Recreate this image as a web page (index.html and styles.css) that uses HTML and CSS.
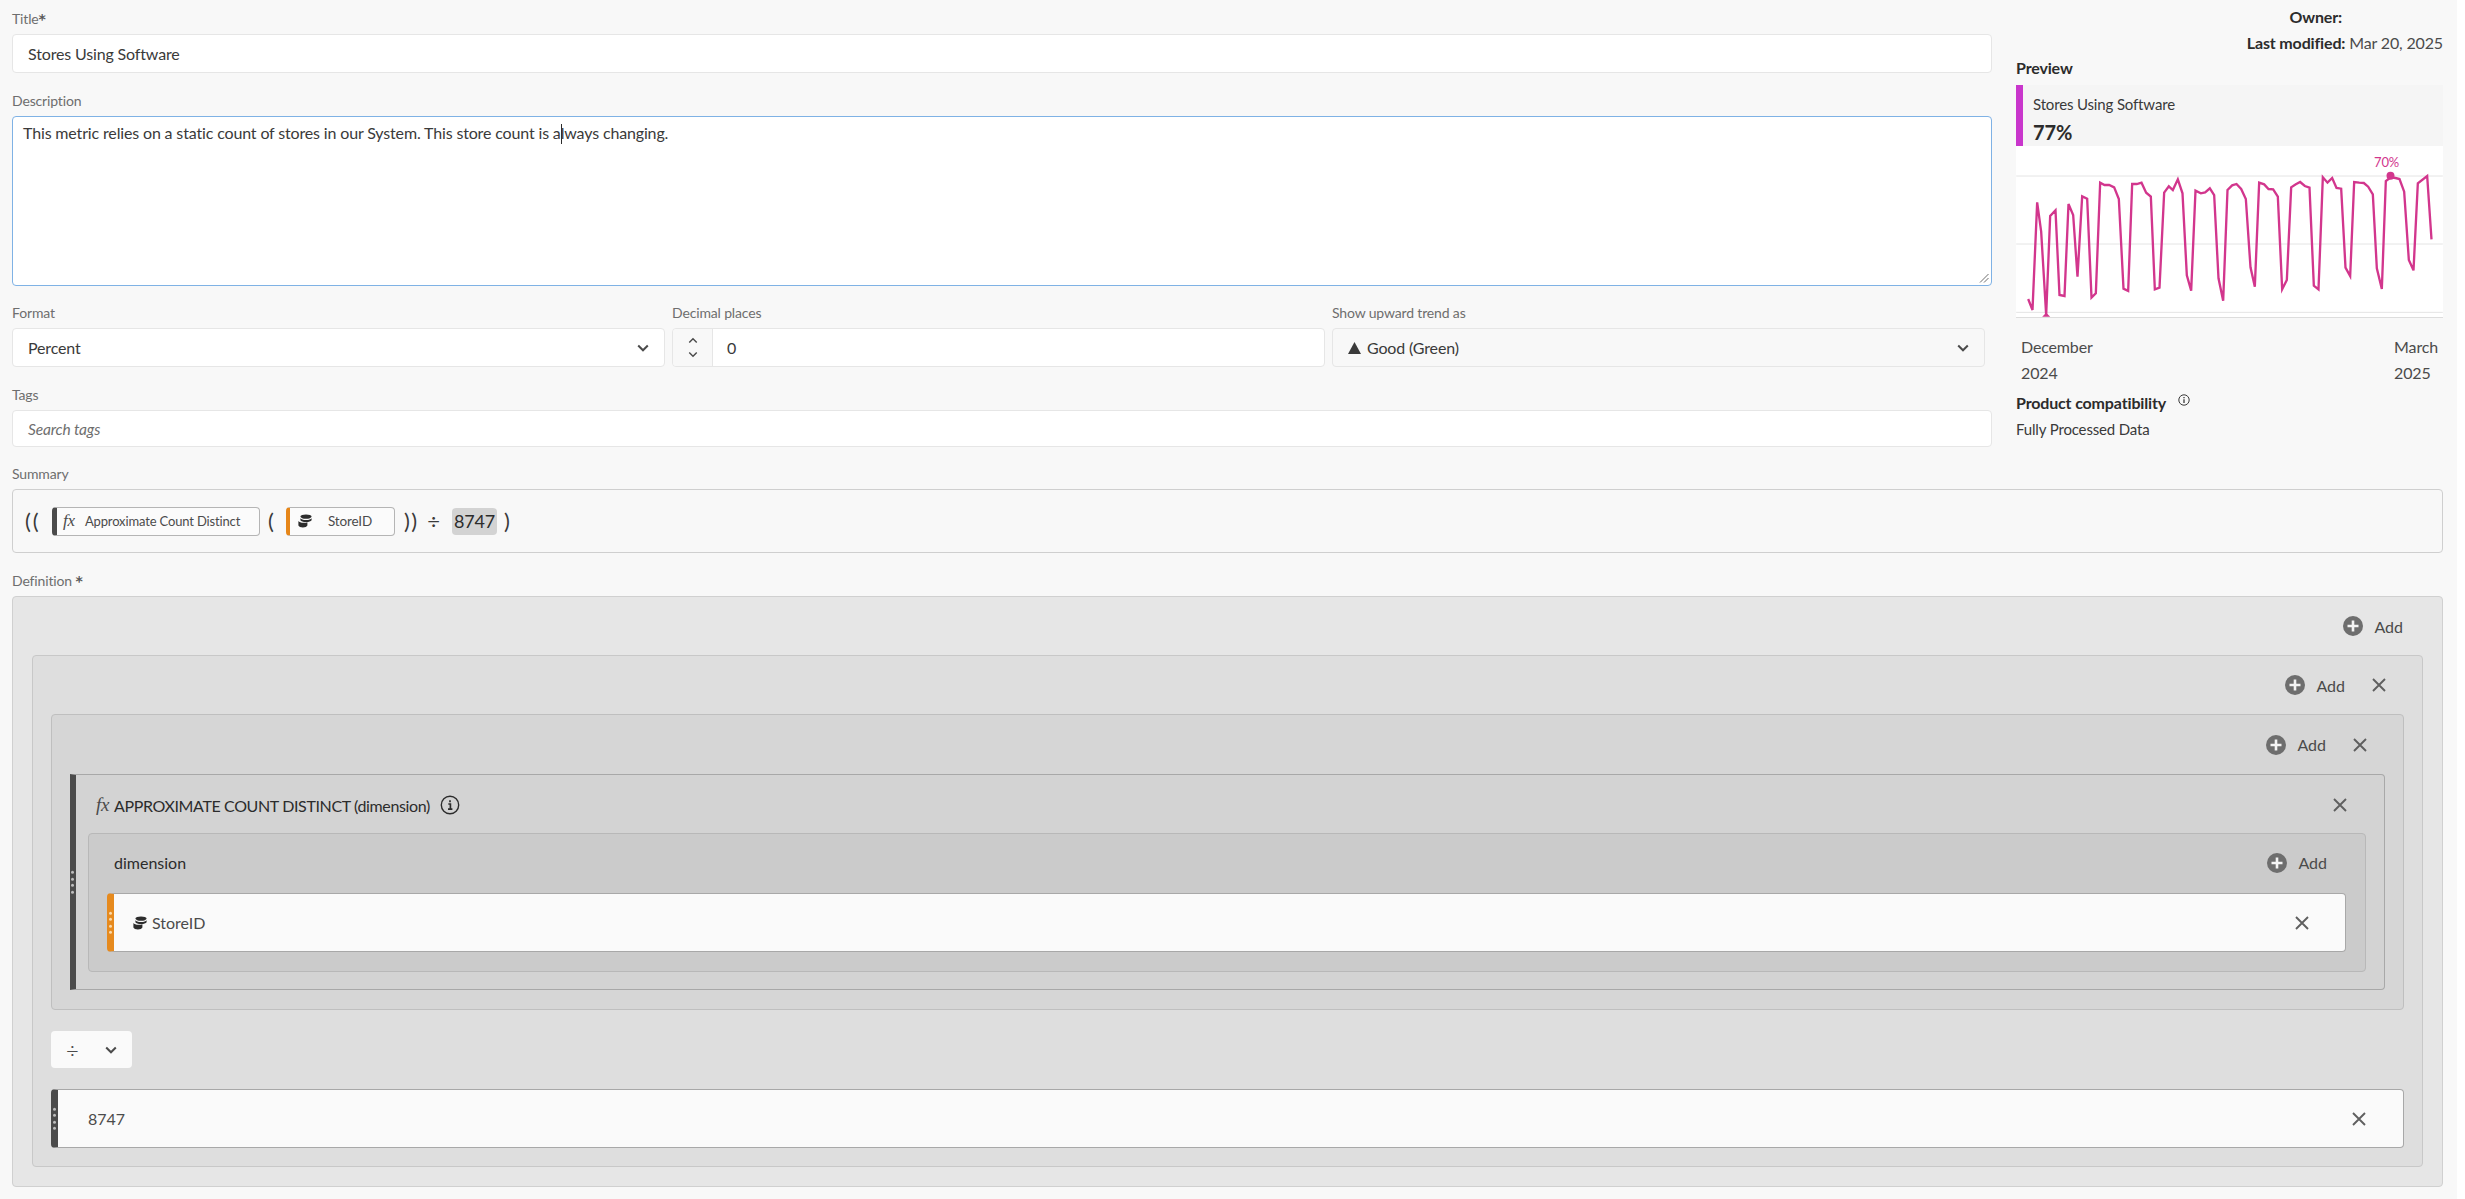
FILE: index.html
```html
<!DOCTYPE html>
<html lang="en">
<head>
<meta charset="utf-8">
<title>Stores Using Software</title>
<link rel="stylesheet" href="styles.css">
</head>
<body>
<svg class="defs" width="0" height="0" aria-hidden="true">
  <symbol id="i-plus" viewBox="0 0 20 20"><circle cx="10" cy="10" r="10" fill="#6e6e6e"/><path d="M10 4.500v11M4.500 10h11" stroke="#f4f4f4" stroke-width="2.600"/></symbol>
  <symbol id="i-x" viewBox="0 0 16 16"><path d="M2 2l12 12M14 2L2 14" stroke="#5f5f5f" stroke-width="1.900" fill="none"/></symbol>
  <symbol id="i-chev" viewBox="0 0 12 8"><path d="M1.200 1.500L6 6.300l4.800-4.800" stroke="#4b4b4b" stroke-width="2" fill="none"/></symbol>
  <symbol id="i-db" viewBox="0 0 14 14"><ellipse cx="8" cy="2.600" rx="5.600" ry="2.200" fill="#2c2c2c"/><path d="M2.400 4.200c.8 1.200 2.600 1.800 5.600 1.800s4.800-.6 5.600-1.800v2c-.8 1.200-2.600 1.800-5.600 1.800S3.200 7.400 2.400 6.200z" fill="#2c2c2c"/><path d="M.4 7c.8 1.200 2.600 1.800 5.100 1.800 1.500 0 2.900-.2 3.900-.6v3.400c-.6 1.200-2.200 1.900-4.500 1.900S1 12.800.4 11.600z" fill="#2c2c2c"/></symbol>
</svg>
<main class="page">
  <section class="top">
    <div class="left">
      <div class="field">
        <div class="label">Title<span class="star">*</span></div>
        <div class="input h-title">Stores Using Software</div>
      </div>
      <div class="field">
        <div class="label">Description</div>
        <div class="textarea">This metric relies on a static count of stores in our System. This store count is a<span class="caret"></span>lways changing.
          <svg class="grip" width="10" height="10" viewBox="0 0 10 10"><path d="M1 9.500L9.500 1M5 9.500L9.500 5" stroke="#6e6e6e" stroke-width="1" fill="none"/></svg>
        </div>
      </div>
      <div class="row3">
        <div class="field">
          <div class="label">Format</div>
          <div class="input select h-sel"><span>Percent</span><svg class="chev" width="12" height="8"><use href="#i-chev"/></svg></div>
        </div>
        <div class="field">
          <div class="label">Decimal places</div>
          <div class="input number h-sel">
            <div class="stepper">
              <svg width="10" height="7" viewBox="0 0 12 8"><path d="M1.500 6.500L6 2l4.500 4.500" stroke="#4b4b4b" stroke-width="1.700" fill="none"/></svg>
              <svg width="10" height="7" viewBox="0 0 12 8"><path d="M1.500 1.500L6 6l4.500-4.500" stroke="#4b4b4b" stroke-width="1.700" fill="none"/></svg>
            </div>
            <span class="num">0</span>
          </div>
        </div>
        <div class="field">
          <div class="label">Show upward trend as</div>
          <div class="input select trend h-sel"><span class="good"><svg width="13" height="12" viewBox="0 0 13 12"><path d="M6.500 0L13 12H0z" fill="#3a3a3a"/></svg>Good (Green)</span><svg class="chev" width="12" height="8"><use href="#i-chev"/></svg></div>
        </div>
      </div>
      <div class="field">
        <div class="label">Tags</div>
        <div class="input h-tags placeholder">Search tags</div>
      </div>
    </div>
    <aside class="right">
      <div class="meta owner"><b>Owner:</b></div>
      <div class="meta modified"><b>Last modified:</b> Mar 20, 2025</div>
      <div class="meta preview"><b>Preview</b></div>
      <div class="card">
        <div class="card-head">
          <div class="card-name">Stores Using Software</div>
          <div class="card-val">77%</div>
        </div>
        <div class="chart">
          <svg class="chart-svg" width="427" height="171" viewBox="168 438 1280 513">
            <path d="M168 528H1448M168 732H1448M168 937H1448" stroke="#e4e4e4" stroke-width="3" fill="none"/>
            <polyline fill="none" stroke="#d2368d" stroke-width="7" stroke-linejoin="miter" points="204,897 217,930 231,607 243,695 258,945 270,648 286,631 298,885 313,888 325,612 339,645 352,830 366,589 381,596 394,893 407,880 420,548 433,555 447,555 462,562 476,597 490,866 504,873 516,552 530,552 544,548 558,578 572,590 584,868 598,863 612,578 626,559 638,570 653,538 667,580 680,826 693,872 706,572 722,580 735,577 749,565 762,585 775,835 789,902 802,570 816,556 829,552 843,567 857,597 871,802 884,860 897,548 912,553 925,567 939,568 953,590 966,868 980,840 993,562 1007,553 1020,546 1034,558 1048,563 1061,857 1075,868 1088,532 1102,548 1116,534 1129,564 1143,566 1156,803 1170,828 1182,546 1197,548 1211,549 1224,560 1238,583 1250,805 1265,867 1277,543 1292,532 1306,534 1318,537 1332,575 1346,780 1360,811 1373,550 1401,528 1414,718"/>
            <circle cx="1291" cy="527" r="12" fill="#d2368d"/>
            <path d="M246 950L258 938l12 12z" fill="#d2368d"/>
          </svg>
          <span class="peak">70%</span>
        </div>
      </div>
      <div class="axis">
        <div><div>December</div><div>2024</div></div>
        <div><div>March</div><div>2025</div></div>
      </div>
      <div class="compat"><b>Product compatibility</b>
        <svg width="12" height="12" viewBox="0 0 12 12"><circle cx="6" cy="6" r="5.200" fill="none" stroke="#3a3a3a" stroke-width="1"/><path d="M6 5.200v3.800M6 3v1.300" stroke="#3a3a3a" stroke-width="1.300"/></svg>
      </div>
      <div class="compat-val">Fully Processed Data</div>
    </aside>
  </section>

  <section class="field wide">
    <div class="label">Summary</div>
    <div class="summary">
      <span class="paren p-first">((</span>
      <span class="chip chip-fn"><i class="fx">fx</i>Approximate Count Distinct</span>
      <span class="paren p-mid">(</span>
      <span class="chip chip-dim"><svg width="14" height="14"><use href="#i-db"/></svg><span>StoreID</span></span>
      <span class="paren p-close">))</span>
      <span class="paren p-div">÷</span>
      <span class="static">8747</span>
      <span class="paren p-end">)</span>
    </div>
  </section>

  <section class="field wide">
    <div class="label">Definition <span class="star">*</span></div>
    <div class="box lv0">
      <div class="hdr pr-0"><span class="add"><svg width="20" height="20"><use href="#i-plus"/></svg>Add</span></div>
      <div class="box lv1">
        <div class="hdr pr-1"><span class="add"><svg width="20" height="20"><use href="#i-plus"/></svg>Add</span><svg class="x" width="16" height="16"><use href="#i-x"/></svg></div>
        <div class="box lv2">
          <div class="hdr hdr-tall pr-1"><span class="add"><svg width="20" height="20"><use href="#i-plus"/></svg>Add</span><svg class="x" width="16" height="16"><use href="#i-x"/></svg></div>
          <div class="box func">
            <span class="dots"><i></i><i></i><i></i><i></i></span>
            <div class="hdr func-hdr">
              <span class="func-title"><i class="fx fx-big">fx</i>APPROXIMATE COUNT DISTINCT (dimension)
                <svg class="info" width="20" height="20" viewBox="0 0 20 20"><circle cx="10" cy="10" r="8.700" fill="none" stroke="#2c2c2c" stroke-width="1.400"/><path d="M8.300 9h2.100v5M8 14.200h4.400M10 5.200v2" stroke="#2c2c2c" stroke-width="1.700" fill="none"/></svg>
              </span>
              <svg class="x" width="16" height="16"><use href="#i-x"/></svg>
            </div>
            <div class="box dimbox">
              <div class="hdr hdr-tall dim-hdr"><span>dimension</span><span class="add"><svg width="20" height="20"><use href="#i-plus"/></svg>Add</span></div>
              <div class="item item-orange">
                <span class="dots"><i></i><i></i><i></i><i></i></span>
                <span class="item-name"><svg width="14" height="14"><use href="#i-db"/></svg>StoreID</span>
                <svg class="x" width="16" height="16"><use href="#i-x"/></svg>
              </div>
            </div>
          </div>
        </div>
        <div class="opsel"><span class="op">÷</span><svg width="12" height="8"><use href="#i-chev"/></svg></div>
        <div class="item item-dark">
          <span class="dots"><i></i><i></i><i></i><i></i></span>
          <span class="item-name num-name">8747</span>
          <svg class="x" width="16" height="16"><use href="#i-x"/></svg>
        </div>
      </div>
    </div>
  </section>
</main>
</body>
</html>
```
FILE: styles.css
```css
* { box-sizing: border-box; }
html, body { margin: 0; padding: 0; background: #fff; }
body { font-family: Lato, "Noto Sans", sans-serif; font-size: 16px; color: #3a3a3a; letter-spacing: -0.15px; }
.defs { position: absolute; }
.page { width: 2457px; min-height: 1199px; background: #f8f8f8; padding: 0 14px 12px 12px; overflow: hidden; }

.top { display: grid; grid-template-columns: 1980px 427px; column-gap: 24px; height: 446px; padding-top: 9px; }
.left { display: flex; flex-direction: column; gap: 18px; }
.row3 { display: grid; grid-template-columns: repeat(3, 1fr); column-gap: 7px; padding-right: 7px; }

.field { display: flex; flex-direction: column; }
.wide { margin-top: 18px; }
.label { height: 25px; line-height: 19px; font-size: 14px; color: #6e6e6e; white-space: pre; }
.star { font-family: "DejaVu Sans", sans-serif; font-size: 14px; font-weight: 700; color: #5a5a5a; }

.input { display: flex; align-items: center; background: #fff; border: 1px solid #e6e6e6; border-radius: 4px; padding-left: 15px; font-size: 16px; color: #3a3a3a; }
.h-title { height: 39px; }
.h-sel { height: 39px; }
.h-tags { height: 37px; }
.placeholder { font-style: italic; color: #6e6e6e; font-size: 15.500px; }
.select { justify-content: space-between; padding-right: 15px; }
.trend { background: #f8f8f8; }
.good { display: flex; align-items: center; gap: 6px; }
.number { padding-left: 0; }
.stepper { width: 40px; height: 100%; background: #f8f8f8; border-right: 1px solid #e6e6e6; display: flex; flex-direction: column; align-items: center; justify-content: center; gap: 7px; border-radius: 4px 0 0 4px; flex: none; }
.num { margin-left: 14px; }

.textarea { position: relative; height: 170px; background: #fff; border: 1.500px solid #7fb2e5; border-radius: 4px; padding: 5px 10px; font-size: 16px; line-height: 22px; color: #3a3a3a; margin-bottom: -1px; }
.caret { display: inline-block; width: 1px; height: 20px; background: #2c2c2c; vertical-align: -5px; margin-right: -1px; }
.grip { position: absolute; right: 2px; bottom: 2px; }

.right { display: flex; flex-direction: column; margin-top: -9px; }
.meta { height: 26px; line-height: 26px; font-size: 16px; color: #4b4b4b; white-space: nowrap; }
.meta b { color: #2c2c2c; }
.owner { padding-top: 4px; text-align: right; padding-right: 101px; height: 30px; }
.modified { text-align: right; height: 26px; }
.preview { height: 29px; line-height: 24px; }
.card { height: 232px; display: flex; flex-direction: column; }
.card-head { height: 61px; background: #f5f5f5; border-left: 7px solid #c936cc; padding: 9px 0 0 10px; }
.card-name { font-size: 15px; line-height: 20px; color: #3a3a3a; }
.card-val { font-size: 20px; font-weight: 700; line-height: 28px; margin-top: 4px; color: #2c2c2c; }
.chart { position: relative; flex: 1; background: #fff; border-bottom: 1px solid #ddd; }
.chart-svg { display: block; }
.peak { position: absolute; left: 358px; top: 7px; font-size: 13px; color: #d2368d; line-height: 18px; }
.axis { display: flex; justify-content: space-between; padding: 17px 5px 0 5px; font-size: 16px; line-height: 26px; color: #4b4b4b; }
.compat { margin-top: 5px; font-size: 16px; line-height: 24px; color: #2c2c2c; display: flex; align-items: flex-start; gap: 12px; }
.compat b { font-weight: 700; }
.compat svg { margin-top: 3px; }
.compat-val { font-size: 15px; line-height: 26px; margin-top: 1px; color: #3a3a3a; }

.summary { height: 64px; display: flex; align-items: center; background: #f8f8f8; border: 1px solid #cfcfcf; border-radius: 4px; padding: 0 0 0 12px; font-size: 22px; color: #3a3a3a; }
.paren { line-height: 28px; }
.p-first { width: 27px; letter-spacing: 2px; }
.p-mid { width: 18px; margin-left: 8px; }
.p-close { width: 20px; margin-left: 9px; letter-spacing: 1.500px; }
.p-div { width: 19px; text-align: center; }
.p-end { margin-left: 7px; }
.chip { display: flex; align-items: center; height: 29px; border: 1px solid #b5b5b5; border-radius: 4px; background: #fbfbfb; font-size: 13px; color: #4b4b4b; }
.chip-fn { width: 208px; border-left: 5px solid #4b4b4b; padding-left: 6px; }
.chip-dim { width: 109px; border-left: 4px solid #e68619; padding-left: 8px; gap: 16px; font-size: 13.500px; }
.fx { font-family: "Liberation Serif", serif; font-style: italic; color: #4b4b4b; font-size: 17px; margin-right: 10px; }
.static { width: 45px; height: 27px; margin-left: 9px; border-radius: 4px; background: #d3d3d3; font-size: 18px; line-height: 27px; text-align: center; color: #2c2c2c; }

.box { border: 1px solid #c6c6c6; border-radius: 4px; padding: 0 18px 19px; }
.lv0 { height: 591px; background: #e6e6e6; padding: 0 19px 19px; border-color: #d0d0d0; }
.lv1 { height: 512px; background: #dedede; border-color: #c8c8c8; padding-bottom: 18px; }
.lv2 { height: 296px; background: #d6d6d6; border-color: #bfbfbf; }
.func { position: relative; height: 216px; background: #d3d3d3; border: 1px solid #a8a8a8; border-left: 6px solid #4b4b4b; padding: 0 18px 17px 12px; border-radius: 0 4px 4px 0; }
.dimbox { height: 139px; background: #cbcbcb; border-color: #b8b8b8; padding: 0 19px 19px 18px; }

.hdr { height: 58px; display: flex; align-items: center; justify-content: flex-end; }
.hdr-tall { height: 59px; }
.pr-0 { padding-right: 20px; }
.pr-1 { padding-right: 17px; }
.add { display: flex; align-items: center; gap: 11px; font-size: 16px; letter-spacing: 0; color: #4b4b4b; }
.x { display: block; flex: none; }
.pr-1 .x { margin-left: 26px; }
.func-hdr { justify-content: space-between; padding: 2px 18px 0 8px; }
.func-title { display: flex; align-items: center; font-size: 16px; letter-spacing: -0.37px; color: #2c2c2c; }
.fx-big { margin-right: 5px; font-size: 19px; }
.info { margin-left: 10px; }
.dim-hdr { justify-content: space-between; padding: 0 19px 2px 7px; }
.dim-hdr > span:first-child { font-size: 16px; letter-spacing: 0; color: #2c2c2c; }

.item { position: relative; height: 59px; display: flex; align-items: center; justify-content: space-between; background: #fafafa; border: 1px solid #a8a8a8; border-radius: 4px; }
.item-orange { border-left: 7px solid #e68a1e; padding: 0 35px 0 19px; }
.item-dark { height: 59px; margin-top: 21px; border-left: 7px solid #4b4b4b; padding: 0 36px 0 30px; }
.item-name { display: flex; align-items: center; gap: 5px; font-size: 16px; letter-spacing: 0; color: #4b4b4b; }
.dots { position: absolute; left: -5px; top: 50%; transform: translateY(-50%); display: flex; flex-direction: column; gap: 3.500px; }
.dots i { display: block; width: 3px; height: 3px; border-radius: 50%; background: #bdbdbd; }
.item-orange .dots i { background: #fbd9a8; }

.opsel { width: 81px; height: 37px; margin-top: 21px; display: flex; align-items: center; justify-content: space-between; background: #fafafa; border-radius: 4px; padding: 0 15px 0 15px; }
.op { font-size: 22px; font-weight: 300; color: #4b4b4b; }
```
